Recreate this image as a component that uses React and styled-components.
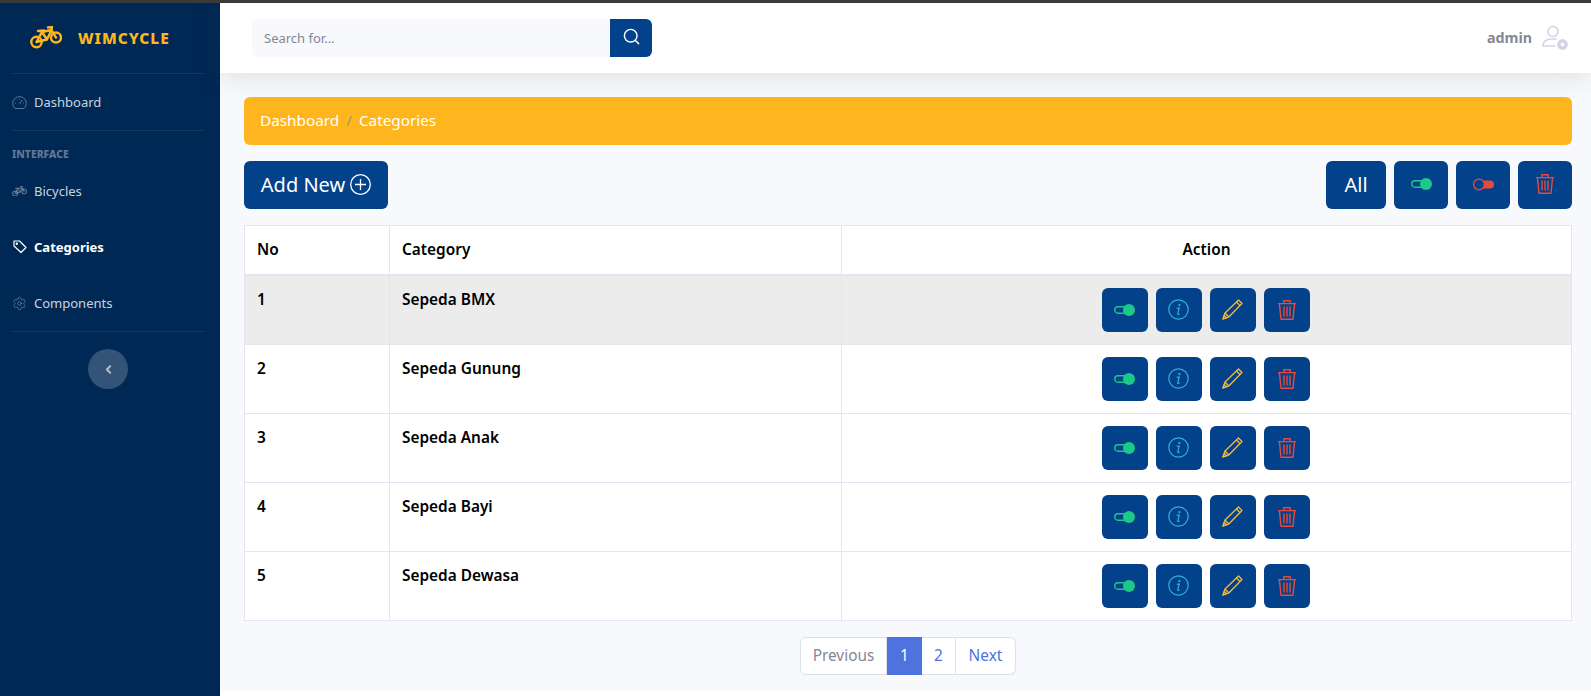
import styled, { createGlobalStyle } from "styled-components";
import { ChevronLeft, Search, Settings } from "lucide-react";

const FONT = `"Noto Sans", "Open Sans", sans-serif`;

const Global = createGlobalStyle`
  * { box-sizing: border-box; }
  html, body { margin: 0; height: 100%; }
  body { background: #fff; font-family: ${FONT}; color: #858796; }
  #root { height: 100%; }
`;

const Page = styled.div`
  display: flex;
  height: 696px;
  border-top: 3px solid #3a3a3a;
  overflow: hidden;
`;

const Sidebar = styled.aside`
  width: 220px;
  flex: none;
  background: #002855;
  display: flex;
  flex-direction: column;
  padding: 0 16px 0 12px;
`;

const Brand = styled.div`
  height: 70px;
  display: flex;
  align-items: center;
  gap: 16px;
  padding-left: 18px;
  color: #ffb61e;
  font-size: 15.5px;
  font-weight: 800;
  letter-spacing: 1px;
`;

const Divider = styled.hr`
  width: 100%;
  margin: 0;
  border: 0;
  border-top: 1px solid rgba(255, 255, 255, 0.08);
`;

const NavItem = styled.a`
  height: 56px;
  flex: none;
  display: flex;
  align-items: center;
  gap: 7px;
  font-size: 13px;
  font-weight: ${(p) => (p.$active ? 700 : 400)};
  color: ${(p) => (p.$active ? "#fff" : "rgba(255,255,255,0.8)")};
`;

const NavIcon = styled.span`
  width: 15px;
  height: 15px;
  display: flex;
  align-items: center;
  justify-content: center;
  color: ${(p) => (p.$active ? "#fff" : "rgba(255,255,255,0.35)")};
`;

const NavHeading = styled.div`
  height: 32px;
  padding-top: 16px;
  font-size: 10.4px;
  line-height: 14px;
  font-weight: 800;
  color: rgba(255, 255, 255, 0.4);
  text-transform: uppercase;
`;

const Collapse = styled.button`
  width: 40px;
  height: 40px;
  margin: 17px auto 0;
  border: 0;
  border-radius: 50%;
  background: rgba(255, 255, 255, 0.2);
  color: rgba(255, 255, 255, 0.6);
  display: flex;
  align-items: center;
  justify-content: center;
  padding: 0;
`;

const Main = styled.div`
  flex: 1;
  min-width: 0;
  display: flex;
  flex-direction: column;
  padding-bottom: 5px;
`;

const Body = styled.div`
  flex: 1;
  background: #f8f9fc;
`;

const Topbar = styled.header`
  height: 70px;
  background: #fff;
  display: flex;
  align-items: center;
  justify-content: space-between;
  padding: 0 23px 0 32px;
  box-shadow: 0 2.4px 28px rgba(58, 59, 69, 0.15);
  position: relative;
`;

const SearchBox = styled.div`
  width: 400px;
  height: 38px;
  margin-top: -1px;
  display: flex;
  background: #f8f9fc;
  border-radius: 6px;
  overflow: hidden;
`;

const SearchText = styled.div`
  flex: 1;
  padding-left: 12px;
  font-size: 13px;
  line-height: 38px;
  color: #858796;
`;

const SearchBtn = styled.button`
  width: 42px;
  border: 0;
  padding: 0 0 2px;
  background: #03428b;
  color: #fff;
  display: flex;
  align-items: center;
  justify-content: center;
`;

const User = styled.div`
  display: flex;
  align-items: center;
  gap: 10px;
  margin-top: -1px;
  font-size: 14.3px;
  font-weight: 700;
  color: #858796;
`;

const Content = styled.main`
  padding: 24px 19px 0 24px;
`;

const Breadcrumb = styled.nav`
  height: 48px;
  display: flex;
  align-items: center;
  gap: 7px;
  padding: 0 16px 2px;
  background: #ffb61e;
  border-radius: 6px;
  color: #fff;
  font-size: 15.3px;
`;

const Sep = styled.span`
  color: #ab965f;
`;

const Toolbar = styled.div`
  display: flex;
  justify-content: space-between;
  margin: 16px 0;
`;

const ButtonGroup = styled.div`
  display: flex;
  gap: 8px;
`;

const BigButton = styled.button`
  height: 48px;
  width: ${(p) => p.$width || 54}px;
  border: 0;
  padding: 0 0 2px;
  border-radius: 6px;
  background: #03428b;
  color: #fff;
  font-family: ${FONT};
  font-size: 20px;
  display: flex;
  align-items: center;
  justify-content: center;
  gap: 5px;
`;

const Table = styled.table`
  width: 100%;
  table-layout: fixed;
  border-collapse: collapse;
  background: #fff;
  color: #000;
  font-size: 15.4px;
  font-weight: 600;
`;

const Th = styled.th`
  height: 49px;
  padding: 0 12px;
  border: 1px solid #e3e6f0;
  border-bottom-width: 2px;
  text-align: ${(p) => (p.$center ? "center" : "left")};
  font-weight: 600;
`;

const Row = styled.tr`
  background: ${(p) => (p.$hover ? "#ececec" : "#fff")};
`;

const Td = styled.td`
  height: 69px;
  padding: 12px;
  border: 1px solid #e3e6f0;
  vertical-align: top;
  line-height: 24px;
`;

const Actions = styled.div`
  display: flex;
  justify-content: center;
  gap: 8px;
  margin-right: 2px;
`;

const RowButton = styled.button`
  width: 46px;
  height: 44px;
  border: 0;
  padding: 0;
  border-radius: 6px;
  background: #03428b;
  display: flex;
  align-items: center;
  justify-content: center;
`;

const Pager = styled.nav`
  display: flex;
  justify-content: center;
  margin-top: 16px;
`;

const PageLink = styled.a`
  height: 38px;
  display: flex;
  align-items: center;
  justify-content: center;
  width: ${(p) => p.$width}px;
  background: ${(p) => (p.$active ? "#4e73df" : "#fff")};
  color: ${(p) => (p.$active ? "#fff" : p.$muted ? "#858796" : "#4e73df")};
  border: 1px solid ${(p) => (p.$active ? "#4e73df" : "#dddfeb")};
  border-left-width: ${(p) => (p.$first || p.$active ? 1 : 0)}px;
  border-radius: ${(p) => (p.$first ? "6px 0 0 6px" : p.$last ? "0 6px 6px 0" : "0")};
  font-size: 15.4px;
`;

const BikeIcon = ({ size = 32 }) => (
  <svg width={size} height={size * 0.72} viewBox="0 0 32 23" fill="none" stroke="currentColor" strokeWidth="2.4" strokeLinecap="round" strokeLinejoin="round">
    <circle cx="6.5" cy="16" r="5.2" />
    <circle cx="26" cy="11.5" r="5" />
    <path d="M6.5 16 12 6 21.5 4 26 11.5M12 6 17 13.5 21.5 4M6.5 16 17 13.5M8 5 14 4.5M18 1.5 22 1 21.5 4" />
  </svg>
);

const GaugeIcon = () => (
  <svg width="15" height="13" viewBox="0 0 15 13" fill="none" stroke="currentColor" strokeWidth="1">
    <path d="M3 12.5a6.8 6.8 0 1 1 9 0Z" />
    <path d="M7.5 8 10 4M3 7h1M11 7h1M5 3.5l.5.5M7.5 2.5v1" />
  </svg>
);

const TagIcon = () => (
  <svg width="14" height="14" viewBox="0 0 14 14" fill="none" stroke="currentColor" strokeWidth="1.2" strokeLinejoin="round">
    <path d="M1 1h5.5l6.5 6.5L8 12.5 1 6Z" />
    <circle cx="3.8" cy="3.8" r=".6" />
  </svg>
);

const ToggleOn = () => (
  <svg width="21" height="12" viewBox="0 0 21 12">
    <rect x=".75" y="2.75" width="14" height="6.5" rx="3.25" fill="none" stroke="#1cc88a" strokeWidth="1.4" />
    <circle cx="15" cy="6" r="6" fill="#1cc88a" />
  </svg>
);

const ToggleOff = () => (
  <svg width="21" height="13" viewBox="0 0 21 13">
    <rect x="6" y="2.5" width="15" height="8" rx="4" fill="#e74a3b" />
    <circle cx="6" cy="6.5" r="5.4" fill="#03428b" stroke="#e74a3b" strokeWidth="1.3" />
  </svg>
);

const InfoIcon = () => (
  <svg width="21" height="21" viewBox="0 0 21 21" fill="none" stroke="#2fb3d6" strokeWidth="1.2" strokeLinecap="round">
    <circle cx="10.5" cy="10.5" r="9.7" />
    <path d="M9.2 9.2h2l-1.5 5.6q-.2 .8 1.4 .3" />
    <circle cx="11.4" cy="6.2" r=".5" />
  </svg>
);

const PencilIcon = () => (
  <svg width="21" height="21" viewBox="0 0 21 21" fill="none" stroke="#f6b93e" strokeWidth="1.3" strokeLinejoin="round">
    <path d="M1 20 3 14 16.5 1 20 4.5 6.8 18Z" />
    <path d="M3 14 6.8 18M14.5 3 18 6.6M1 20l1.2-3.6 2.3 2.4Z" />
  </svg>
);

const TrashIcon = () => (
  <svg width="18" height="20" viewBox="0 0 18 20" fill="none" stroke="#e74a3b" strokeWidth="1.4" strokeLinejoin="round">
    <path d="M0 3.6h18M5.8 3.4V.7h6.4v2.7" />
    <path d="M1.4 3.6 3 19.2h12l1.6-15.6" />
    <path d="M6 6.5v10M9 6.5v10M12 6.5v10" />
  </svg>
);

const PlusCircle = () => (
  <svg width="21" height="21" viewBox="0 0 21 21" fill="none" stroke="#fff" strokeWidth="1.3">
    <circle cx="10.5" cy="10.5" r="9.8" />
    <path d="M10.5 5v11M5 10.5h11" />
  </svg>
);

const UserCog = () => (
  <svg width="26" height="26" viewBox="0 0 26 26" fill="none" stroke="#d1d3e2" strokeWidth="1.6" strokeLinecap="round">
    <circle cx="11" cy="6.5" r="5" />
    <path d="M1 21q0-6 7-7h6M1 21h12" />
    <circle cx="20.5" cy="19.5" r="3.6" strokeWidth="3.4" strokeDasharray="2.6 .8" />
  </svg>
);

const categories = ["Sepeda BMX", "Sepeda Gunung", "Sepeda Anak", "Sepeda Bayi", "Sepeda Dewasa"];

export default function App() {
  return (
    <>
      <Global />
      <Page>
        <Sidebar>
          <Brand>
            <BikeIcon />
            WIMCYCLE
          </Brand>
          <Divider />
          <NavItem>
            <NavIcon><GaugeIcon /></NavIcon>
            Dashboard
          </NavItem>
          <Divider />
          <NavHeading>Interface</NavHeading>
          <NavItem>
            <NavIcon><BikeIcon size={15} /></NavIcon>
            Bicycles
          </NavItem>
          <NavItem $active>
            <NavIcon $active><TagIcon /></NavIcon>
            Categories
          </NavItem>
          <NavItem>
            <NavIcon><Settings size={15} strokeWidth={1.3} /></NavIcon>
            Components
          </NavItem>
          <Divider />
          <Collapse><ChevronLeft size={13} strokeWidth={4} /></Collapse>
        </Sidebar>
        <Main>
          <Topbar>
            <SearchBox>
              <SearchText>Search for...</SearchText>
              <SearchBtn><Search size={19} strokeWidth={1.8} /></SearchBtn>
            </SearchBox>
            <User>
              admin
              <UserCog />
            </User>
          </Topbar>
          <Body>
            <Content>
              <Breadcrumb>
                <span>Dashboard</span>
                <Sep>/</Sep>
                <span>Categories</span>
              </Breadcrumb>
              <Toolbar>
                <BigButton $width={144}>Add New <PlusCircle /></BigButton>
                <ButtonGroup>
                  <BigButton $width={60}>All</BigButton>
                  <BigButton><ToggleOn /></BigButton>
                  <BigButton><ToggleOff /></BigButton>
                  <BigButton><TrashIcon /></BigButton>
                </ButtonGroup>
              </Toolbar>
              <Table>
                <colgroup>
                  <col width="145" />
                  <col width="452" />
                  <col />
                </colgroup>
                <thead>
                  <tr>
                    <Th>No</Th>
                    <Th>Category</Th>
                    <Th $center>Action</Th>
                  </tr>
                </thead>
                <tbody>
                  {categories.map((name, i) => (
                    <Row key={name} $hover={i === 0}>
                      <Td>{i + 1}</Td>
                      <Td>{name}</Td>
                      <Td>
                        <Actions>
                          <RowButton><ToggleOn /></RowButton>
                          <RowButton><InfoIcon /></RowButton>
                          <RowButton><PencilIcon /></RowButton>
                          <RowButton><TrashIcon /></RowButton>
                        </Actions>
                      </Td>
                    </Row>
                  ))}
                </tbody>
              </Table>
              <Pager>
                <PageLink $first $muted $width={87}>Previous</PageLink>
                <PageLink $active $width={35}>1</PageLink>
                <PageLink $width={34}>2</PageLink>
                <PageLink $last $width={60}>Next</PageLink>
              </Pager>
            </Content>
          </Body>
        </Main>
      </Page>
    </>
  );
}
